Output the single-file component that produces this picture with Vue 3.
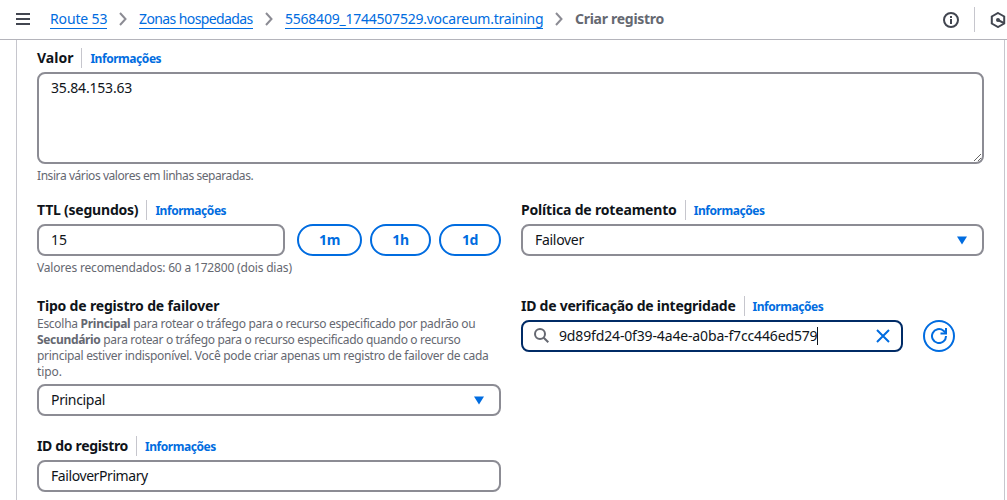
<script setup>
const crumbs = [
  { text: 'Route 53', cls: 'c1' },
  { text: 'Zonas hospedadas', cls: 'c2' },
  { text: '5568409_1744507529.vocareum.training', cls: 'c3' },
]
const presets = [
  { text: '1m', cls: 'p1' },
  { text: '1h', cls: 'p2' },
  { text: '1d', cls: 'p3' },
]
</script>

<template>
  <div class="page">
    <header class="bar">
      <svg class="menu" width="14" height="12" viewBox="0 0 14 12"><path d="M0 1h14M0 6h14M0 11h14" /></svg>
      <nav class="crumbs">
        <template v-for="c in crumbs" :key="c.text">
          <a class="crumb" :class="c.cls"><span>{{ c.text }}</span></a>
          <svg class="sep" width="8" height="14" viewBox="0 0 8 14"><path d="M1 1l5.500 6L1 13" /></svg>
        </template>
        <span class="current">Criar registro</span>
      </nav>
      <div class="tools">
        <svg class="info-icon" width="16" height="16" viewBox="0 0 16 16">
          <circle cx="8" cy="8" r="7" />
          <path d="M8 7v5M8 4v2" />
        </svg>
        <i class="rule"></i>
        <svg class="hex" width="16" height="16" viewBox="0 0 16 16">
          <path d="M8 1l6.200 3.500v7L8 15l-6.200-3.500v-7z" />
          <path d="M8 8l6 3.200" />
          <circle cx="8" cy="8" r="2" />
        </svg>
      </div>
    </header>

    <main class="panel">
      <section class="field">
        <div class="label"><b class="l-valor">Valor</b><a class="info">Informações</a></div>
        <textarea class="area" spellcheck="false">35.84.153.63</textarea>
        <p class="hint h1">Insira vários valores em linhas separadas.</p>
      </section>

      <div class="cols row-ttl">
        <section class="field">
          <div class="label"><b class="l-ttl">TTL (segundos)</b><a class="info">Informações</a></div>
          <div class="line">
            <div class="box ttl"><span>15</span></div>
            <div class="presets">
              <button v-for="p in presets" :key="p.text" class="pill" :class="p.cls">{{ p.text }}</button>
            </div>
          </div>
          <p class="hint h2">Valores recomendados: 60 a 172800 (dois dias)</p>
        </section>
        <section class="field">
          <div class="label"><b class="l-pol">Política de roteamento</b><a class="info">Informações</a></div>
          <div class="box"><span class="v-fail">Failover</span>
            <svg class="caret" width="12" height="9" viewBox="0 0 12 9"><path d="M1 .5h10L6 8.500z" /></svg>
          </div>
        </section>
      </div>

      <div class="cols row-type">
        <section class="field">
          <div class="label"><b class="l-tipo">Tipo de registro de failover</b></div>
          <div class="desc">
            <div class="d1">Escolha <b>Principal</b> para rotear o tráfego para o recurso especificado por padrão ou</div>
            <div class="d2"><b>Secundário</b> para rotear o tráfego para o recurso especificado quando o recurso</div>
            <div class="d3">principal estiver indisponível. Você pode criar apenas um registro de failover de cada</div>
            <div class="d4">tipo.</div>
          </div>
          <div class="box"><span class="v-prin">Principal</span>
            <svg class="caret" width="12" height="9" viewBox="0 0 12 9"><path d="M1 .5h10L6 8.500z" /></svg>
          </div>
        </section>
        <section class="field">
          <div class="label"><b class="l-id">ID de verificação de integridade</b><a class="info">Informações</a></div>
          <div class="line health">
            <div class="box search">
              <svg class="glass" width="16" height="16" viewBox="0 0 16 16"><circle cx="6" cy="6" r="5" /><path d="M9.700 9.700l4.600 4.600" /></svg>
              <span class="v-hash">9d89fd24-0f39-4a4e-a0ba-f7cc446ed579</span><i class="cursor"></i>
              <svg class="clear" width="14" height="14" viewBox="0 0 14 14"><path d="M1 1l12 12M13 1L1 13" /></svg>
            </div>
            <button class="refresh">
              <svg width="16" height="16" viewBox="0 0 16 16"><path d="M15 8A7 7 0 1 1 12.500 2.700L15 5" /><path d="M15 0v5.500H9.500" /></svg>
            </button>
          </div>
        </section>
      </div>

      <div class="cols row-id">
        <section class="field">
          <div class="label"><b class="l-reg">ID do registro</b><a class="info">Informações</a></div>
          <div class="box"><span class="v-reg">FailoverPrimary</span></div>
        </section>
      </div>
    </main>
  </div>
</template>

<style>
body { margin: 0; background: #fff; overflow: hidden; }
</style>

<style scoped>
* { box-sizing: border-box; }
.page { width: 1007px; height: 500px; overflow: hidden; background: #fff; color: #0f141a; font: 14px/20px "Noto Sans", "Open Sans", sans-serif; }
svg { fill: none; flex: none; display: block; }
.bar { height: 40px; border-bottom: 1px solid #b4b4bb; display: flex; align-items: center; padding-left: 16px; overflow: hidden; }
.menu { stroke: #424650; stroke-width: 2; margin: -1px 20px 0 0; }
.crumbs { display: flex; align-items: center; white-space: nowrap; height: 20px; margin-top: -1px; }
.crumb { color: #006ce0; border-bottom: 1px solid #006ce0; height: 20px; line-height: 20px; flex: none; }
.sep { stroke: #8c8c94; stroke-width: 2; margin: 0 12px; }
.c1 { width: 57px; letter-spacing: -.15px; }
.c2 { width: 114px; letter-spacing: -.6px; }
.c3 { width: 258px; letter-spacing: -.23px; }
.current { color: #656871; font-weight: 700; letter-spacing: -.28px; }
.tools { display: flex; align-items: center; margin-left: auto; width: 64px; flex: none; }
.info-icon { stroke: #424650; stroke-width: 2; }
.rule { width: 1px; height: 25px; background: #c6c6cd; margin: -1px 15px 0; flex: none; }
.hex { stroke: #424650; stroke-width: 2; }
.hex circle { fill: #424650; stroke: none; }
.panel { width: 989px; height: 460px; margin-left: 16px; border: solid #c6c6cd; border-width: 0 1px; padding: 8px 20px 0; }
.label { height: 20px; display: flex; align-items: center; margin-bottom: 4px; white-space: nowrap; }
.label b { font-weight: 700; }
.l-ttl { letter-spacing: -.22px; }
.l-pol { letter-spacing: -.18px; }
.l-tipo { letter-spacing: -.18px; }
.l-id { letter-spacing: -.25px; }
.l-reg { letter-spacing: -.34px; }
.info { font-size: 12px; font-weight: 700; color: #006ce0; border-left: 1px solid #c6c6cd; margin-left: 8px; padding-left: 8px; height: 20px; line-height: 21px; letter-spacing: -.45px; }
.area { display: block; width: 947px; height: 92px; border: 2px solid #8c8c94; border-radius: 8px; padding: 4px 12px; font: inherit; color: inherit; background: #fff; outline: 0; resize: both; margin: 0; letter-spacing: -.18px; }
.hint { margin: 4px 0 0; font-size: 12px; line-height: 16px; color: #656871; white-space: nowrap; }
.h1 { letter-spacing: -.43px; }
.h2 { letter-spacing: -.18px; }
.cols { display: grid; grid-template-columns: 464px 463px; column-gap: 20px; }
.row-ttl { margin-top: 16px; }
.row-type { margin-top: 20px; }
.row-id { margin-top: 20px; }
.line { display: flex; gap: 12px; }
.box { height: 32px; border: 2px solid #8c8c94; border-radius: 8px; padding: 0 12px; display: flex; align-items: center; white-space: nowrap; }
.ttl { width: 248px; }
.v-fail { letter-spacing: -.3px; }
.v-prin { letter-spacing: -.33px; }
.v-reg { letter-spacing: -.42px; }
.v-hash { letter-spacing: -.15px; }
.presets { display: flex; gap: 8px; }
.pill { height: 32px; border: 2px solid #006ce0; border-radius: 16px; background: #fff; color: #006ce0; font: 700 14px/20px "Noto Sans", sans-serif; letter-spacing: -.4px; padding: 0; }
.p1 { width: 65px; } .p2 { width: 61px; } .p3 { width: 62px; }
.caret { margin-left: auto; margin-right: 2px; fill: #006ce0; }
.desc { font-size: 12px; line-height: 16px; color: #656871; white-space: nowrap; margin-top: -4px; margin-bottom: 4px; }
.d1 { letter-spacing: -.28px; }
.d2 { letter-spacing: -.33px; }
.d3 { letter-spacing: -.29px; }
.d4 { letter-spacing: -.1px; }
.health { gap: 20px; }
.search { width: 382px; border-color: #002b66; }
.glass { stroke: #656871; stroke-width: 2; margin: 0 9px 0 -1px; }
.cursor { width: 1px; height: 18px; background: #0f141a; }
.clear { stroke: #006ce0; stroke-width: 2; margin-left: auto; margin-right: -1px; }
.refresh { width: 32px; height: 32px; border: 2px solid #006ce0; border-radius: 50%; background: #fff; padding: 0; display: flex; align-items: center; justify-content: center; }
.refresh svg { stroke: #006ce0; stroke-width: 2; }
</style>
